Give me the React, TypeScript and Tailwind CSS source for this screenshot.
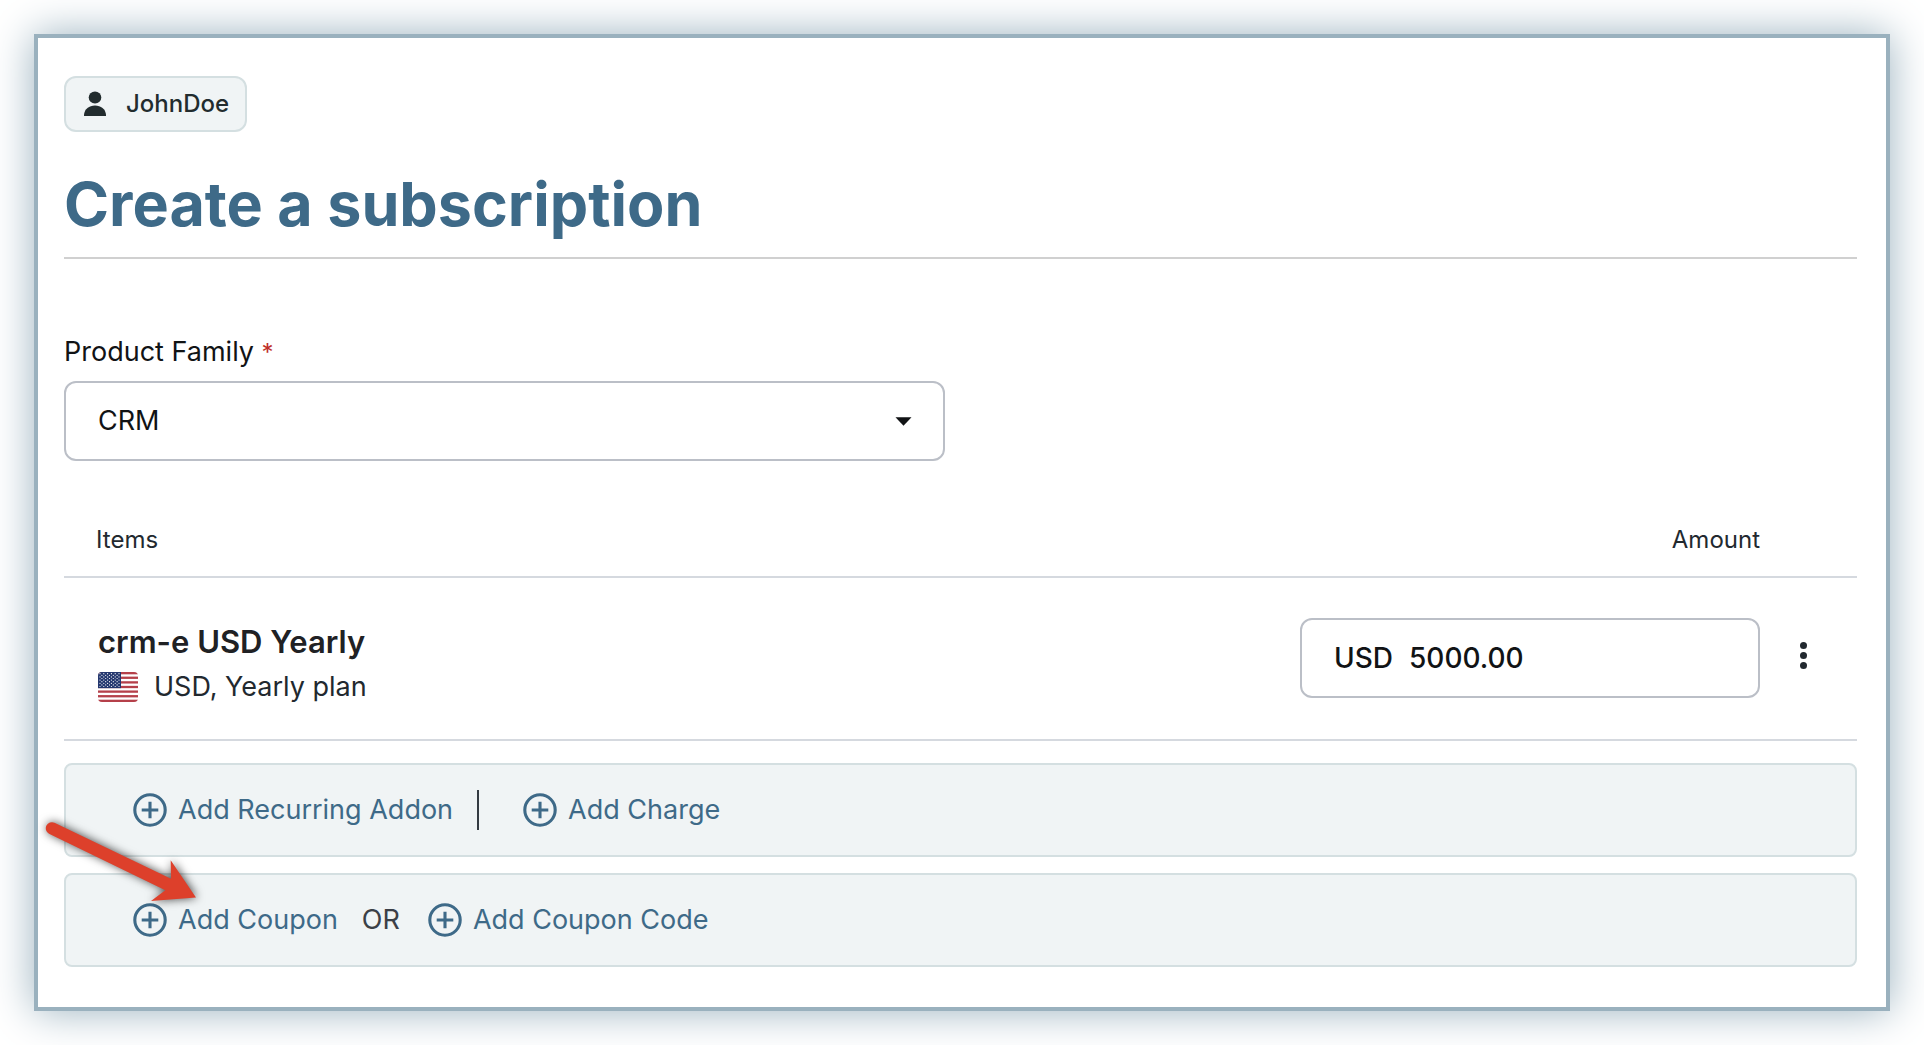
import { useState } from 'react'
import type { ReactNode } from 'react'

const families = ['CRM', 'Billing', 'Support']

function PlusCircle() {
  return (
    <svg width="34" height="34" viewBox="0 0 34 34" fill="none" stroke="currentColor" strokeWidth="3.1" aria-hidden="true">
      <circle cx="17" cy="17" r="15.2" />
      <path d="M17 8.7v16.6M8.7 17h16.6" />
    </svg>
  )
}

function UserIcon() {
  return (
    <svg width="22" height="26" viewBox="0 0 22 26" fill="currentColor" aria-hidden="true">
      <ellipse cx="11" cy="6.5" rx="6.3" ry="6" />
      <path d="M0 25v-1.5C0.6 18 5 14.4 11 14.4S21.4 18 22 23.5V25z" />
    </svg>
  )
}

function UsFlag() {
  const stripes = [0, 2, 4, 6, 8, 10, 12]
  const stars = Array.from({ length: 9 }, (_, row) => row)

  return (
    <svg className="rounded-sm" width="40" height="30" viewBox="0 0 40 30" role="img" aria-label="United States">
      <rect width="40" height="30" fill="#fff" />
      {stripes.map((i) => (
        <rect key={i} y={(i * 30) / 13} width="40" height={30 / 13} fill="#b5404a" />
      ))}
      <rect width="23" height="16.15" fill="#24376f" />
      {stars.map((row) =>
        Array.from({ length: row % 2 ? 5 : 6 }, (_, col) => (
          <circle
            key={`${row}-${col}`}
            cx={2 + col * 3.8 + (row % 2 ? 1.9 : 0)}
            cy={1.7 + row * 1.6}
            r="0.6"
            fill="#fff"
          />
        ))
      )}
    </svg>
  )
}

function AddButton({ children }: { children: ReactNode }) {
  return (
    <button type="button" className="flex items-center gap-[11px] text-[#3e6a88] hover:underline">
      <PlusCircle />
      {children}
    </button>
  )
}

function Arrow() {
  return (
    <svg
      className="absolute left-0 top-[772px] pointer-events-none drop-shadow-[1px_0px_5px_rgba(0,0,0,0.7)]"
      width="180"
      height="110"
      viewBox="0 0 180 110"
      fill="#dd402b"
      aria-hidden="true"
    >
      <path d="M16.5 12.7L133 68.8L132.7 50.2L158 87.5L113 91L127.3 80.2L11 23.8A6.2 6.2 0 0 1 16.5 12.7Z" />
    </svg>
  )
}

export default function App() {
  const [family, setFamily] = useState('CRM')
  const [amount, setAmount] = useState('5000.00')

  return (
    <div className="bg-white p-[34px] font-['Inter',sans-serif] text-[27px] leading-10 text-[#22292f]">
      <main className="relative border-4 border-[#9ab1be] bg-white pt-[38px] pr-[29px] pb-10 pl-[26px] shadow-[0_0_40px_#9ab1be]">

        {/* Customer */}
        <a
          href="#customer"
          className="inline-flex h-14 items-center gap-5 rounded-xl border-2 border-[#d4dfe1] bg-[#f0f4f5] pr-4 pl-[18px] align-top text-2xl font-medium text-[#222c2e]"
        >
          <UserIcon />
          JohnDoe
        </a>

        <h1 className="mt-9 border-b-2 border-[#d0d0d0] pb-[17px] text-[61px] leading-[72px] font-bold text-[#3e6a88]">
          Create a subscription
        </h1>

        {/* Product family */}
        <div className="mt-[73px] w-[881px] max-w-full">
          <label htmlFor="family" className="block text-[#111315]">
            Product Family <span className="text-2xl text-[#c0302b]">*</span>
          </label>
          <div className="relative mt-[9px]">
            <select
              id="family"
              value={family}
              onChange={(e) => setFamily(e.target.value)}
              className="h-20 w-full appearance-none rounded-xl border-2 border-[#bbbfc7] bg-white px-8 text-[#111315]"
            >
              {families.map((name) => (
                <option key={name}>{name}</option>
              ))}
            </select>
            <svg
              className="absolute top-9 right-[33px] pointer-events-none"
              width="17"
              height="9"
              viewBox="0 0 18 9"
              fill="#111315"
              aria-hidden="true"
            >
              <path d="M0.5 0h17L9 9z" />
            </svg>
          </div>
        </div>

        {/* Items */}
        <table className="mt-[58px] w-full">
          <thead>
            <tr className="border-b-2 border-[#d5d9df] text-2xl">
              <th className="h-[58px] pl-8 pb-4 text-left font-normal">Items</th>
              <th className="h-[58px] pb-4 text-right font-normal">Amount</th>
              <th className="w-[97px]" aria-label="Actions" />
            </tr>
          </thead>
          <tbody>
            <tr className="border-b-2 border-[#d5d9df]">
              <td className="h-[163px] pt-1.5 pl-[34px]">
                <p className="text-[31px] leading-[50px] font-semibold text-[#202124]">crm-e USD Yearly</p>
                <p className="flex items-center gap-4">
                  <UsFlag />
                  USD, Yearly plan
                </p>
              </td>
              <td className="w-[460px] pb-0.5">
                <div className="flex h-20 items-center gap-4 rounded-xl border-2 border-[#bbbfc7] px-8 text-[28px] font-medium text-[#111315]">
                  <label htmlFor="amount">USD</label>
                  <input
                    id="amount"
                    value={amount}
                    onChange={(e) => setAmount(e.target.value)}
                    className="w-full min-w-0 bg-transparent outline-none"
                  />
                </div>
              </td>
              <td className="w-[97px] pr-2.5 pb-1.5">
                <button type="button" aria-label="Item options" className="mx-auto flex w-8 flex-col items-center gap-[3px]">
                  <span className="size-[7px] rounded-full bg-[#22292f]" />
                  <span className="size-[7px] rounded-full bg-[#22292f]" />
                  <span className="size-[7px] rounded-full bg-[#22292f]" />
                </button>
              </td>
            </tr>
          </tbody>
        </table>

        {/* Extras */}
        <div className="mt-[22px] flex h-[94px] items-center rounded-lg border-2 border-[#d4dfe1] bg-[#f0f4f5] px-[67px]">
          <AddButton>Add Recurring Addon</AddButton>
          <span className="ml-6 mr-11 h-10 w-0.5 bg-[#343b42]" />
          <AddButton>Add Charge</AddButton>
        </div>

        <div className="mt-4 flex h-[94px] items-center rounded-lg border-2 border-[#d4dfe1] bg-[#f0f4f5] px-[67px]">
          <AddButton>Add Coupon</AddButton>
          <span className="ml-6 mr-7 text-[#3b4047]">OR</span>
          <AddButton>Add Coupon Code</AddButton>
        </div>

        <Arrow />
      </main>
    </div>
  )
}
